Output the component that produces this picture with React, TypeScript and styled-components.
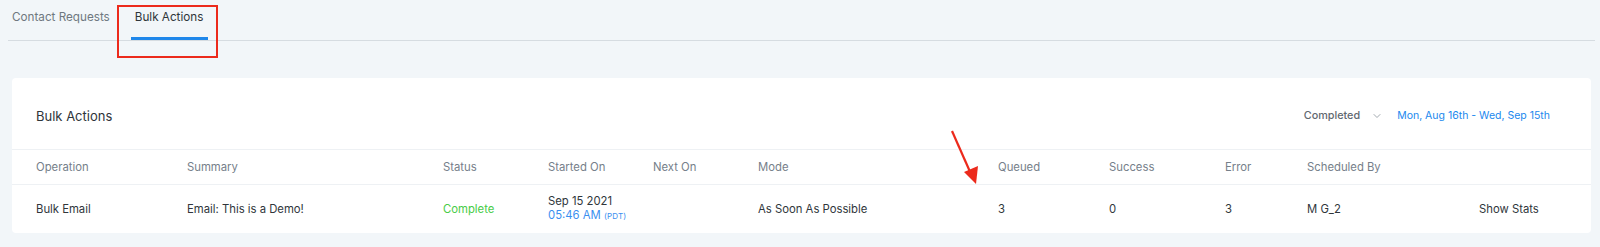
import React from 'react';
import styled, { createGlobalStyle } from 'styled-components';
import { ChevronDown } from 'lucide-react';

const GlobalStyle = createGlobalStyle`
  html, body {
    margin: 0;
    padding: 0;
    background-color: #f2f6f9;
    font-family: Inter, 'Liberation Sans', Arial, sans-serif;
    -webkit-font-smoothing: antialiased;
  }
`;

const columns = [
  { key: 'operation', title: 'Operation' },
  { key: 'summary', title: 'Summary' },
  { key: 'status', title: 'Status' },
  { key: 'startedOn', title: 'Started On' },
  { key: 'nextOn', title: 'Next On' },
  { key: 'mode', title: 'Mode' },
  { key: 'queued', title: 'Queued' },
  { key: 'success', title: 'Success' },
  { key: 'error', title: 'Error' },
  { key: 'scheduledBy', title: 'Scheduled By' },
  { key: 'actions', title: '' },
];

const App = () => {
  return (
    <Page>
      <GlobalStyle />
      <TabBar>
        <Tab>Contact Requests</Tab>
        <Tab active>Bulk Actions</Tab>
      </TabBar>

      <Card>
        <CardHeader>
          <CardTitle>Bulk Actions</CardTitle>
          <Filters>
            <StatusSelect>
              Completed
              <ChevronDown size={12} strokeWidth={1.6} color="#8a939b" />
            </StatusSelect>
            <DateRange>Mon, Aug 16th - Wed, Sep 15th</DateRange>
          </Filters>
        </CardHeader>

        <HeadRow>
          {columns.map((col) => (
            <HeadCell key={col.key}>{col.title}</HeadCell>
          ))}
        </HeadRow>

        <BodyRow>
          <Cell>Bulk Email</Cell>
          <Cell>Email: This is a Demo!</Cell>
          <Cell status="complete">Complete</Cell>
          <Cell>
            <DateStack>
              <span>Sep 15 2021</span>
              <TimeText>
                05:46 AM <Zone>(PDT)</Zone>
              </TimeText>
            </DateStack>
          </Cell>
          <Cell />
          <Cell>As Soon As Possible</Cell>
          <Cell>3</Cell>
          <Cell>0</Cell>
          <Cell>3</Cell>
          <Cell>M G_2</Cell>
          <Cell>Show Stats</Cell>
        </BodyRow>
      </Card>

      <Highlight />
      <Arrow width="40" height="60" viewBox="0 0 40 60">
        <line x1="6" y1="3" x2="25" y2="46" stroke="#ec2a1c" strokeWidth="2.2" />
        <polygon points="18,44 32,38 30,56" fill="#ec2a1c" />
      </Arrow>
    </Page>
  );
};

export default App;

const Page = styled.main`
  position: relative;
  height: 247px;
  overflow: hidden;
  background-color: #f2f6f9;
`;

const TabBar = styled.nav`
  display: flex;
  align-items: flex-end;
  gap: 16px;
  height: 40px;
  margin: 0 5px 0 8px;
  border-bottom: 1px solid #d6dce1;
`;

const Tab = styled.div<{ active?: boolean }>`
  box-sizing: border-box;
  height: 40px;
  padding: 10px 5px 0 4px;
  font-size: 11.7px;
  color: ${({ active }) => (active ? '#2f353a' : '#6f7880')};
  border-bottom: 3px solid ${({ active }) => (active ? '#1f87ea' : 'transparent')};
`;

const Card = styled.section`
  margin: 37px 9px 0 12px;
  background-color: #fff;
  border-radius: 4px;
  height: 155px;
`;

const CardHeader = styled.header`
  display: flex;
  align-items: center;
  justify-content: space-between;
  box-sizing: border-box;
  height: 72px;
  padding: 4px 41px 0 24px;
  border-bottom: 1px solid #eef1f4;
`;

const CardTitle = styled.h1`
  margin: 0;
  font-size: 13px;
  font-weight: 400;
  color: #2f353a;
`;

const Filters = styled.div`
  display: flex;
  align-items: center;
  gap: 14px;
`;

const StatusSelect = styled.div`
  display: flex;
  align-items: center;
  gap: 11px;
  font-size: 10.8px;
  font-weight: 500;
  color: #5f6870;
`;

const DateRange = styled.div`
  font-size: 10.5px;
  color: #2188ee;
`;

const gridColumns = '151px 256px 105px 105px 105px 240px 111px 116px 82px 172px 1fr';

const HeadRow = styled.div`
  display: grid;
  grid-template-columns: ${gridColumns};
  align-items: center;
  box-sizing: border-box;
  height: 35px;
  padding-left: 24px;
  border-bottom: 1px solid #eef1f4;
`;

const HeadCell = styled.div`
  font-size: 11.3px;
  color: #76808a;
  white-space: nowrap;
`;

const BodyRow = styled.div`
  display: grid;
  grid-template-columns: ${gridColumns};
  align-items: center;
  height: 47px;
  padding-left: 24px;
`;

const Cell = styled.div<{ status?: 'complete' }>`
  font-size: 11.3px;
  color: ${({ status }) => (status === 'complete' ? '#48cc48' : '#30363b')};
  white-space: nowrap;
`;

const DateStack = styled.div`
  display: flex;
  flex-direction: column;
  line-height: 14px;
  margin-top: -1px;
`;

const TimeText = styled.span`
  color: #3a8ff0;
`;

const Zone = styled.span`
  font-size: 8px;
  letter-spacing: 0.02em;
`;

const Highlight = styled.div`
  position: absolute;
  left: 117px;
  top: 5px;
  width: 101px;
  height: 53px;
  box-sizing: border-box;
  border: 2px solid #ec2a1c;
`;

const Arrow = styled.svg`
  position: absolute;
  left: 946px;
  top: 128px;
`;
